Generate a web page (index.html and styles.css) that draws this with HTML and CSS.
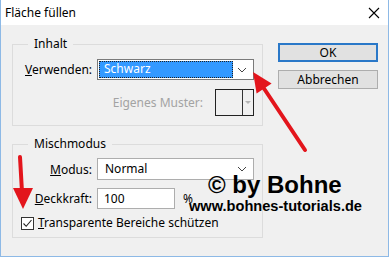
FILE: index.html
```html
<!DOCTYPE html>
<html>
<head>
  <meta charset="utf-8"/>
  <title>Fläche füllen</title>
  <link rel="stylesheet" href="styles.css">
</head>
<body>

<div class="window">
  <div class="titlebar">
    <span class="title">Fläche füllen</span>
    <svg class="close" width="12" height="12" viewBox="0 0 12 12">
      <path d="M1 1 L11 11 M11 1 L1 11" stroke="#000" stroke-width="1.1" fill="none"/>
    </svg>
  </div>

  <div class="content">
    <div class="groups">
      <fieldset class="group group-inhalt">
        <legend>Inhalt</legend>
        <div class="row">
          <label class="lbl lbl-left"><u>V</u>erwenden:</label>
          <div class="combo combo-focus">
            <span class="combo-value selected">Schwarz</span>
            <svg class="chev" width="10" height="6" viewBox="0 0 10 6"><path d="M1 1 L5 5 L9 1" stroke="#444" fill="none"/></svg>
          </div>
        </div>
        <div class="row row-pattern">
          <span class="disabled">Eigenes Muster:</span>
          <div class="swatch">
            <div class="swatch-color"></div>
            <div class="swatch-drop"><span class="tri"></span></div>
          </div>
        </div>
      </fieldset>

      <fieldset class="group group-misch">
        <legend>Mischmodus</legend>
        <div class="row">
          <label class="lbl"><u>M</u>odus:</label>
          <div class="combo combo-mode">
            <span class="combo-value">Normal</span>
            <svg class="chev" width="10" height="6" viewBox="0 0 10 6"><path d="M1 1 L5 5 L9 1" stroke="#444" fill="none"/></svg>
          </div>
        </div>
        <div class="row row-opacity">
          <label class="lbl"><u>D</u>eckkraft:</label>
          <div class="field">100</div>
          <span class="unit">%</span>
        </div>
        <div class="row row-check">
          <span class="checkbox">
            <svg width="11" height="11" viewBox="0 0 11 11"><path d="M1.5 5.5 L4.2 8.3 L9.5 2" stroke="#222" stroke-width="1.1" fill="none"/></svg>
          </span>
          <label><u>T</u>ransparente Bereiche schützen</label>
        </div>
      </fieldset>
    </div>

    <div class="buttons">
      <button class="btn btn-default">OK</button>
      <button class="btn">Abbrechen</button>
    </div>
  </div>

  <svg class="arrows" width="389" height="257" viewBox="0 0 389 257">
    <!-- arrow to the Verwenden combo -->
    <line x1="305" y1="150" x2="263" y2="87" stroke="#e3151c" stroke-width="4" stroke-linecap="round"/>
    <polygon points="253,72 271.6,83.6 256.6,93.6" fill="#e3151c"/>
    <!-- arrow to the checkbox -->
    <line x1="20" y1="157" x2="22" y2="192" stroke="#e3151c" stroke-width="4" stroke-linecap="round"/>
    <polygon points="13,188 33,188 23,209" fill="#e3151c"/>
  </svg>

  <div class="watermark">
    <div class="wm-big">© by Bohne</div>
    <div class="wm-small">www.bohnes-tutorials.de</div>
  </div>
</div>

</body>
</html>
```

FILE: styles.css
```css
body {
  margin: 0;
  font-family: "Noto Sans", sans-serif;
  font-size: 12px;
  color: #000;
}
.window {
  position: relative;
  width: 389px;
  height: 257px;
  box-sizing: border-box;
  border: 1px solid #8db9e6;
  border-top: none;
  background: #f0f0f0;
  overflow: hidden;
}
.titlebar {
  height: 25px;
  background: #fff;
  display: flex;
  align-items: center;
  justify-content: space-between;
  padding: 0 8px 0 4px;
}
.title {
  line-height: 16px;
}
.close {
  margin-top: 1px;
}
.content {
  display: flex;
  align-items: flex-start;
  padding: 11px 10px 0 11px;
}
.groups {
  width: 251px;
}
.group {
  box-sizing: border-box;
  width: 251px;
  margin: 0;
  min-width: 0;
  padding: 0 8px 9px 12px;
  border: 1px solid #dcdcdc;
}
.group legend {
  margin-left: 3px;
  padding: 0 6px;
  line-height: 16px;
}
.group-misch {
  margin-top: 10px;
  padding-bottom: 6px;
}
.row {
  display: flex;
  align-items: center;
}
.lbl {
  width: 67px;
  margin-right: 5px;
  text-align: right;
  white-space: nowrap;
}
.lbl-left {
  text-align: left;
}
.group-inhalt .row:first-of-type {
  margin-top: 7px;
}
.combo {
  box-sizing: border-box;
  width: 157px;
  height: 21px;
  background: #fff;
  border: 1px solid #7a7a7a;
  display: flex;
  align-items: center;
  padding: 1px;
}
.combo-value {
  flex: 1;
  padding-left: 6px;
  line-height: 16px;
}
.combo-value.selected {
  height: 17px;
  box-sizing: border-box;
  background: #3399ff;
  color: #fff;
  outline: 1px dotted #222;
  outline-offset: -1px;
  padding-left: 5px;
}
.chev {
  width: 19px;
  flex: none;
  padding: 0 5px 0 4px;
  box-sizing: border-box;
}
.row-pattern {
  justify-content: flex-end;
  margin-top: 9px;
}
.disabled {
  color: #a3a3a3;
  margin-right: 12px;
}
.swatch {
  box-sizing: border-box;
  width: 39px;
  height: 27px;
  border: 1px solid #222;
  display: flex;
}
.swatch-color {
  width: 26px;
  border-right: 1px solid #333;
  background: #f0f0f0;
}
.swatch-drop {
  flex: 1;
  display: flex;
  align-items: center;
  justify-content: center;
}
.tri {
  width: 0;
  height: 0;
  border-left: 3px solid transparent;
  border-right: 3px solid transparent;
  border-top: 3px solid #b4b4b4;
}
.group-misch .row:first-of-type {
  margin-top: 6px;
}
.combo-mode {
  height: 22px;
  border-color: #adadad;
}
.row-opacity {
  margin-top: 8px;
}
.field {
  box-sizing: border-box;
  width: 78px;
  height: 21px;
  border: 1px solid #adadad;
  background: #fff;
  padding-left: 6px;
  line-height: 19px;
}
.unit {
  margin-left: 8px;
}
.row-check {
  margin-top: 6px;
  margin-left: -4px;
  line-height: 16px;
}
.checkbox {
  box-sizing: border-box;
  width: 13px;
  height: 13px;
  border: 1px solid #333;
  background: #fff;
  margin-right: 4px;
  display: flex;
}
.buttons {
  display: flex;
  flex-direction: column;
  gap: 8px;
  margin-top: 7px;
  margin-left: 15px;
}
.btn {
  box-sizing: border-box;
  width: 100px;
  height: 19px;
  padding: 0;
  font-family: "Noto Sans", sans-serif;
  font-size: 12px;
  line-height: 16px;
  color: #000;
  background: #e1e1e1;
  border: 1px solid #adadad;
}
.btn-default {
  border: 2px solid #2a78c8;
}
.arrows {
  position: absolute;
  top: 0;
  left: -1px;
  pointer-events: none;
}
.watermark {
  position: absolute;
  left: 188px;
  top: 173px;
  font-family: "Liberation Sans", Arial, sans-serif;
  font-weight: bold;
  color: #000;
}
.wm-big {
  font-size: 24px;
  line-height: 24px;
  padding-left: 19px;
}
.wm-small {
  font-size: 14.6px;
  line-height: 15px;
  margin-top: 2px;
}
```
